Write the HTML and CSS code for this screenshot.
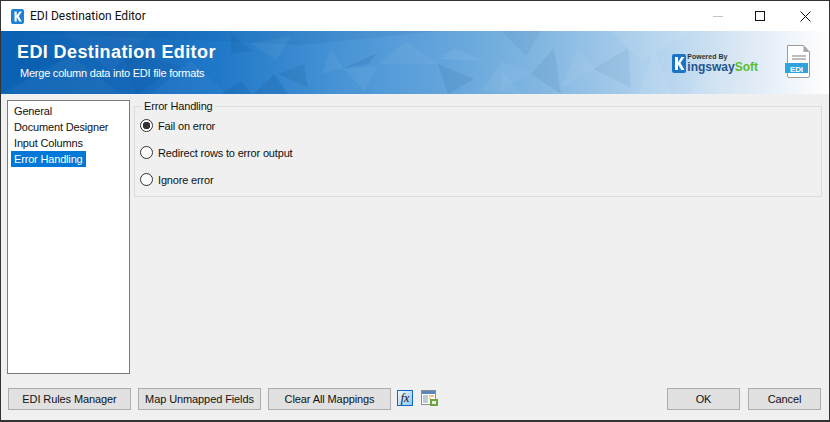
FILE: index.html
```html
<!DOCTYPE html>
<html lang="en">
<head>
<meta charset="utf-8">
<title>EDI Destination Editor</title>
<link rel="stylesheet" href="styles.css">
</head>
<body>
<div class="window">
  <div class="titlebar">
    <svg class="app-icon" width="13" height="15" viewBox="0 0 13 15"><rect width="13" height="15" rx="2" fill="#1b80d6"/><path d="M3.500 2.500h2.200v4l2.800-4h2.500L7.700 7.200l3.100 5.300H8.300L5.700 8v4.500H3.500z" fill="#fff"/></svg>
    <span class="title-text">EDI Destination Editor</span>
    <div class="controls">
      <svg class="ctl" width="10" height="1" viewBox="0 0 10 1"><rect width="10" height="1" fill="#c4c4c4"/></svg>
      <svg class="ctl" width="10" height="10" viewBox="0 0 10 10"><rect x=".5" y=".5" width="9" height="9" fill="none" stroke="#111"/></svg>
      <svg class="ctl" width="11" height="11" viewBox="0 0 11 11"><path d="M.5.500l10 10M10.500.500l-10 10" stroke="#111" fill="none"/></svg>
    </div>
  </div>
  <header class="banner">
    <svg class="facets" width="828" height="63" viewBox="0 0 828 63" preserveAspectRatio="none">
      <g fill="#fff">
        <polygon opacity=".03" points="60,0 150,0 110,40"/>
        <polygon opacity=".04" points="0,63 70,25 120,63"/>
        <polygon opacity=".04" points="150,63 190,30 225,63"/>
        <polygon opacity=".05" points="320,43 330,18 343,37"/>
        <polygon opacity=".05" points="377,33 405,10 437,33"/>
        <polygon opacity=".05" points="343,38 377,35 363,60"/>
        <polygon opacity=".06" points="438,28 453,17 483,30"/>
        <polygon opacity=".06" points="577,17 593,38 560,57"/>
        <polygon opacity=".05" points="500,30 527,42 500,60"/>
        <polygon opacity=".07" points="653,17 670,63 637,63"/>
        <polygon opacity=".05" points="250,12 290,5 275,30"/>
        <polygon opacity=".05" points="480,60 497,35 520,63"/>
        <polygon opacity=".07" points="610,0 690,0 640,30"/>
        <polygon opacity=".07" points="690,63 710,20 745,63"/>
      </g>
      <g fill="#04386f">
        <polygon opacity=".07" points="0,0 440,0 300,14"/>
        <polygon opacity=".1" points="230,3 252,20 230,23"/>
        <polygon opacity=".1" points="303,33 307,57 278,43"/>
        <polygon opacity=".11" points="343,37 377,22 367,33"/>
        <polygon opacity=".09" points="437,33 473,48 447,63"/>
        <polygon opacity=".12" points="273,43 287,63 253,63"/>
        <polygon opacity=".1" points="220,63 240,50 250,63"/>
        <polygon opacity=".07" points="553,17 560,63 530,43"/>
        <polygon opacity=".06" points="593,38 627,17 630,57"/>
        <polygon opacity=".09" points="120,20 180,35 135,63"/>
        <polygon opacity=".07" points="20,10 60,30 15,45"/>
        <polygon opacity=".06" points="500,0 540,0 525,25"/>
      </g>
    </svg>
    <div class="banner-text">
      <h1 class="banner-title">EDI Destination Editor</h1>
      <p class="banner-sub">Merge column data into EDI file formats</p>
    </div>
    <div class="brand">
      <svg class="brand-k" width="14" height="19" viewBox="0 0 14 19"><rect width="14" height="19" rx="2" fill="#1b74c8"/><path d="M3 3h3v5.500L9.300 3h3L8.500 9l4 7H9.300L6 10.500V16H3z" fill="#fff"/></svg>
      <div class="brand-words">
        <span class="brand-pow">Powered By</span>
        <span class="brand-name">ingsway<em class="brand-soft">Soft</em></span>
      </div>
    </div>
    <svg class="file-icon" width="26" height="33" viewBox="0 0 26 33">
      <path d="M2.500.500h16l6 6.500v24a1.500 1.500 0 0 1-1.500 1.500H4a1.500 1.500 0 0 1-1.500-1.500z" fill="#fff" stroke="#9a9a9a"/>
      <path d="M18.500.500v6.500h6z" fill="#a8a8a8"/>
      <path d="M7 11h14M7 14h14" stroke="#a8a8a8" stroke-width="1.300"/>
      <rect y="18" width="23" height="10" fill="#2ea3dc"/>
      <text x="11.500" y="26.500" class="file-label" text-anchor="middle">EDI</text>
    </svg>
  </header>
  <main class="content">
    <ul class="nav">
      <li class="nav-item">General</li>
      <li class="nav-item">Document Designer</li>
      <li class="nav-item">Input Columns</li>
      <li class="nav-item nav-selected">Error Handling</li>
    </ul>
    <fieldset class="group">
      <legend class="group-legend">Error Handling</legend>
      <label class="radio"><span class="dot dot-on"></span>Fail on error</label>
      <label class="radio"><span class="dot"></span>Redirect rows to error output</label>
      <label class="radio"><span class="dot"></span>Ignore error</label>
    </fieldset>
  </main>
  <footer class="footer">
    <button class="btn btn-wide">EDI Rules Manager</button>
    <button class="btn btn-wide">Map Unmapped Fields</button>
    <button class="btn btn-wide">Clear All Mappings</button>
    <svg class="fx" width="16" height="16" viewBox="0 0 16 16"><defs><linearGradient id="fxg" x1="0" y1="0" x2="1" y2="1"><stop offset="0" stop-color="#f2f9fe"/><stop offset="1" stop-color="#8cc6f0"/></linearGradient></defs><rect x=".5" y=".5" width="15" height="15" fill="url(#fxg)" stroke="#1467c4"/><text x="8" y="12" class="fx-label" text-anchor="middle">fx</text></svg>
    <svg class="sheet" width="17" height="16" viewBox="0 0 17 16"><rect x=".5" y=".5" width="14" height="14" fill="#fff" stroke="#8b8f94"/><rect x="1" y="1" width="13" height="3" fill="#5b86b8"/><path d="M2 6h5M2 8h5M2 10h5M2 12h5" stroke="#7f95ad"/><path d="M8 6h5" stroke="#e8b44c" stroke-width="1.500"/><path d="M8 8.500h2" stroke="#e8b44c"/><rect x="9" y="9" width="8" height="7" fill="#6ea53c"/><rect x="11" y="11" width="4" height="3" fill="#e9f3dd"/></svg>
    <div class="spacer"></div>
    <button class="btn btn-std">OK</button>
    <button class="btn btn-std">Cancel</button>
  </footer>
</div>
</body>
</html>
```
FILE: styles.css
```css
* { box-sizing: border-box; }
html, body { margin: 0; padding: 0; }
body { width: 830px; height: 422px; overflow: hidden; font-family: "Liberation Sans", Arimo, sans-serif; font-size: 11px; letter-spacing: -.17px; color: #111; }
.window { width: 830px; height: 422px; display: flex; flex-direction: column; background: #f0f0f0; border: 1px solid #333; border-bottom-width: 2px; }
.titlebar { height: 30px; flex: none; background: #fff; display: flex; align-items: center; padding-left: 10px; }
.app-icon { margin-right: 6px; }
.title-text { font-family: Roboto, sans-serif; font-size: 12px; letter-spacing: 0; color: #111; }
.controls { margin-left: auto; display: flex; align-items: center; }
.ctl { margin-right: 18px; }
.controls .ctl:nth-child(1) { margin-right: 32px; }
.controls .ctl:nth-child(2) { margin-right: 35px; }
.banner { height: 63px; flex: none; position: relative; display: flex; align-items: flex-start; overflow: hidden; background: linear-gradient(90deg, #0a62b4 0%, #1568b8 15%, #1f78c8 26%, #4a95d6 42%, #64a5dc 54%, #85b8e2 66%, #b5d4ee 80%, #dde9f5 90%, #fff 100%); }
.facets { position: absolute; left: 0; top: 0; }
.banner-text { position: relative; padding: 10px 0 0 16px; color: #fff; flex: 1; }
.banner-title { margin: 0; font-size: 18px; line-height: 22px; font-weight: 700; letter-spacing: .4px; }
.banner-sub { margin: 3px 0 0 3px; font-size: 11px; line-height: 15px; letter-spacing: -.23px; }
.brand { position: relative; display: flex; margin: 22px 27px 0 0; align-items: flex-end; }
.brand-k { margin-right: 1px; }
.brand-words { display: flex; flex-direction: column; letter-spacing: 0; }
.brand-pow { font-size: 7px; line-height: 8px; font-weight: 700; color: #333; }
.brand-name { font-size: 12px; line-height: 12px; font-weight: 700; color: #1f5590; }
.brand-soft { font-style: normal; color: #56c02b; }
.file-icon { position: relative; margin: 14px 18px 0 0; flex: none; }
.file-label { font-size: 8px; font-weight: 700; fill: #fff; }
.content { flex: 1; display: flex; padding: 6px 7px 0 6px; min-height: 0; gap: 4px; }
.nav { list-style: none; margin: 0; width: 123px; height: 274px; padding: 2px 3px; background: #fff; border: 1px solid #7a7a7a; flex: none; }
.nav-item { height: 16px; line-height: 16px; padding: 0 3px; width: max-content; }
.nav-selected { background: #0078d7; color: #fff; }
.group { flex: 1; margin: -1px 0 0; height: 98px; padding: 0 0 0 5px; border: 1px solid #dcdcdc; min-inline-size: 0; }
.group-legend { padding: 0 2px; margin-left: 2px; margin-bottom: -1px; line-height: 14px; }
.radio { display: flex; align-items: center; height: 27px; }
.dot { width: 13px; height: 13px; border-radius: 50%; border: 1px solid #333; background: #fff; margin-right: 5px; display: block; }
.dot-on { background: radial-gradient(circle, #333 0 3.500px, #fff 4px); }
.footer { flex: none; height: 47px; display: flex; align-items: flex-start; padding: 15px 8px 0 7px; }
.btn { height: 22px; font-family: inherit; font-size: 11px; letter-spacing: -.1px; color: #111; background: #e1e1e1; border: 1px solid #adadad; padding: 0; }
.btn-wide { width: 123px; margin-right: 7px; }
.btn-wide:nth-of-type(3) { margin-right: 6px; }
.fx { margin: 2px 8px 0 0; }
.fx-label { font-family: "Liberation Serif", serif; font-style: italic; font-size: 12px; fill: #111; }
.sheet { margin-top: 2px; }
.spacer { flex: 1; }
.btn-std { width: 73px; margin-left: 8px; }
```
